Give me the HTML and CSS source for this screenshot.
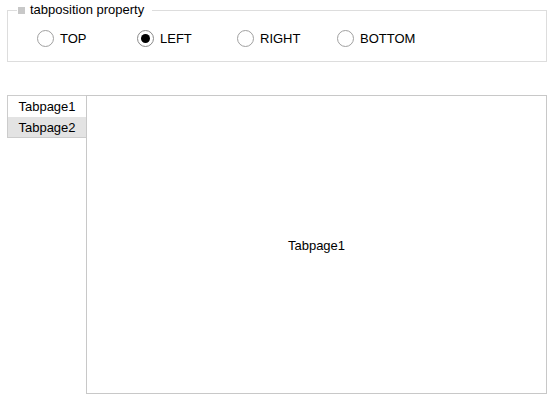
FILE: index.html
```html
<!DOCTYPE html>
<html>
<head>
<meta charset="utf-8">
<link rel="stylesheet" href="styles.css">
</head>
<body>
<fieldset class="group">
  <legend class="group-title"><span class="marker"></span><span>tabposition property</span></legend>
  <div class="radios">
    <label class="radio"><span class="dot"></span><span>TOP</span></label>
    <label class="radio"><span class="dot checked"></span><span>LEFT</span></label>
    <label class="radio"><span class="dot"></span><span>RIGHT</span></label>
    <label class="radio"><span class="dot"></span><span>BOTTOM</span></label>
  </div>
</fieldset>
<div class="tabs">
  <div class="tablist">
    <div class="tab tab-first">Tabpage1</div>
    <div class="tab tab-second">Tabpage2</div>
  </div>
  <div class="panel">Tabpage1</div>
</div>
</body>
</html>
```

FILE: styles.css
```css
html, body {
  margin: 0;
  padding: 0;
  background: #ffffff;
}
body {
  font-family: "Liberation Sans", Arial, sans-serif;
  font-size: 13px;
  color: #000000;
  width: 554px;
  height: 400px;
  overflow: hidden;
}
.group {
  margin: 3px 0 0 7px;
  padding: 0;
  width: 540px;
  box-sizing: border-box;
  border: 1px solid #dddddd;
  min-width: 0;
}
.group-title {
  display: flex;
  align-items: center;
  margin-left: 9px;
  padding: 0 8px 0 1px;
  line-height: 14px;
  height: 14px;
  gap: 5px;
}
.marker {
  display: block;
  width: 7px;
  height: 7px;
  background: #c8c8c8;
}
.radios {
  display: flex;
  padding: 13px 0 14px 29px;
}
.radio {
  display: flex;
  align-items: center;
  gap: 6px;
  width: 100px;
  height: 17px;
  line-height: 17px;
}
.dot {
  width: 15px;
  height: 15px;
  border: 1px solid #a0a0a0;
  border-radius: 50%;
  background: #ffffff;
  display: flex;
  align-items: center;
  justify-content: center;
  flex: none;
}
.dot.checked {
  border-color: #8a8a8a;
}
.dot.checked::after {
  content: "";
  width: 9px;
  height: 9px;
  border-radius: 50%;
  background: #000000;
}
.tabs {
  display: flex;
  margin: 33px 0 0 7px;
  width: 540px;
  height: 299px;
}
.tablist {
  display: flex;
  flex-direction: column;
  width: 79px;
  align-self: flex-start;
  border: 1px solid #cccccc;
  border-right: none;
  box-sizing: border-box;
}
.tab {
  display: flex;
  align-items: center;
  justify-content: center;
  height: 21px;
}
.tab-second {
  height: 20px;
  background: #e3e3e3;
}
.panel {
  flex: 1;
  border: 1px solid #c8c8c8;
  display: flex;
  align-items: center;
  justify-content: center;
  padding-top: 1px;
}
```
